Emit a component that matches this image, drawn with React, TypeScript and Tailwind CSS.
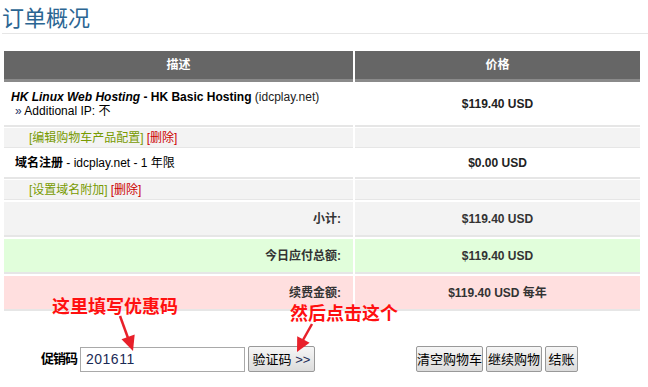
import React from 'react';

const FONT = "font-['Liberation_Sans','Noto_Sans_CJK_SC',sans-serif]";

interface TotalRow {
    label: string;
    price: string;
    bg: string;
}

const TOTALS: TotalRow[] = [
    { label: '小计:', price: '$119.40 USD', bg: 'bg-[#f3f3f3]' },
    { label: '今日应付总额:', price: '$119.40 USD', bg: 'bg-[#e1fedb]' },
    { label: '续费金额:', price: '$119.40 USD 每年', bg: 'bg-[#ffdfdf]' },
];

const Btn: React.FC<{ children: React.ReactNode; className?: string }> = ({ children, className }) => (
    <button
        className={`h-[26px] px-0 whitespace-nowrap flex items-center justify-center border border-[#999] rounded-[2px] bg-gradient-to-b from-[#f6f6f6] to-[#dcdcdc] text-[13px] text-black leading-none ${className ?? ''}`}
    >
        {children}
    </button>
);

const Arrows: React.FC = () => (
    <svg className="absolute inset-0 pointer-events-none" width="648" height="387" viewBox="0 0 648 387">
        <line x1="120" y1="316" x2="128" y2="338" stroke="#e8202a" strokeWidth="2.5" />
        <polygon points="133,351 121.5,339.3 134.7,334.5" fill="#e8202a" />
        <line x1="312" y1="324" x2="303" y2="340" stroke="#e8202a" strokeWidth="2.5" />
        <polygon points="297,352 297.2,336.3 309.6,342.7" fill="#e8202a" />
    </svg>
);

export default function App() {
    return (
        <div className={`relative w-[648px] h-[387px] overflow-hidden bg-white ${FONT} text-[12px] text-[#222]`}>
            {/* title */}
            <div className="ml-[2px] h-[34px] border-b border-[#e6e6e6] pt-[3px]">
                <h1 className="text-[22px] leading-[26px] text-[#2b6592] font-['Noto_Sans_CJK_SC',sans-serif]">订单概况</h1>
            </div>

            {/* cart table */}
            <div className="ml-[4px] mt-[17px] w-[636px] grid grid-cols-[349px_285px] gap-x-[2px]">
                <div className="h-[31px] bg-[#666] border-b-[3px] border-[#8a8a8a] flex items-center justify-center text-white font-bold">描述</div>
                <div className="h-[31px] bg-[#666] border-b-[3px] border-[#8a8a8a] flex items-center justify-center text-white font-bold">价格</div>

                <div className="mt-[1px] h-[44px] border-b-2 border-[#e6e6e6] pl-[7px] flex flex-col justify-center leading-[14px] text-black">
                    <div>
                        <b><i>HK Linux Web Hosting</i> - HK Basic Hosting</b> <span className="text-[#222]">(idcplay.net)</span>
                    </div>
                    <div className="pl-[4px]">
                        <span className="text-[#223366]">»</span> Additional IP: 不
                    </div>
                </div>
                <div className="mt-[1px] h-[44px] border-b-2 border-[#e6e6e6] flex items-center justify-center font-bold">$119.40 USD</div>

                <div className="mt-[1px] h-[20px] bg-[#f3f3f3] border-b border-[#e6e6e6] pl-[25px] flex items-center">
                    <span className="text-[#779a00]">[编辑购物车产品配置]</span>
                    <span className="ml-[3px] text-[#cc0000]">[删除]</span>
                </div>
                <div className="mt-[1px] h-[20px] bg-[#f3f3f3] border-b border-[#e6e6e6]" />

                <div className="mt-[1px] h-[30px] border-b-2 border-[#e6e6e6] pl-[11px] flex items-center text-black">
                    <b>域名注册</b>&nbsp;- idcplay.net - 1 年限
                </div>
                <div className="mt-[1px] h-[30px] border-b-2 border-[#e6e6e6] flex items-center justify-center font-bold">$0.00 USD</div>

                <div className="mt-[1px] h-[20px] bg-[#f3f3f3] border-b border-[#e6e6e6] pl-[25px] flex items-center">
                    <span className="text-[#779a00]">[设置域名附加]</span>
                    <span className="ml-[3px] text-[#cc0000]">[删除]</span>
                </div>
                <div className="mt-[1px] h-[20px] bg-[#f3f3f3] border-b border-[#e6e6e6]" />

                {TOTALS.map((t) => (
                    <React.Fragment key={t.label}>
                        <div className={`mt-[2px] h-[35px] ${t.bg} border-b-2 border-[#e6e6e6] flex items-center justify-end pr-[12px] font-bold text-[#333]`}>
                            {t.label}
                        </div>
                        <div className={`mt-[2px] h-[35px] ${t.bg} border-b-2 border-[#e6e6e6] flex items-center justify-center font-bold text-[#333]`}>
                            {t.price}
                        </div>
                    </React.Fragment>
                ))}
            </div>

            {/* promo + actions */}
            <div className="mt-[35px] flex items-center pl-[41px] pr-[70px]">
                <span className="text-[13px] font-bold text-black mr-[3px] tracking-[-1px]">促销码</span>
                <div className="w-[165px] h-[25px] border border-[#a9a9a9] flex items-center pl-[5px] text-[14px] text-[#1a2a55] tracking-[0.5px]">
                    201611
                </div>
                <Btn className="ml-[3px] w-[67px]">验证码&nbsp;<span className="text-[#1a2a55]">&gt;&gt;</span></Btn>
                <div className="ml-auto flex gap-[3px]">
                    <Btn className="w-[67px]">清空购物车</Btn>
                    <Btn className="w-[56px]">继续购物</Btn>
                    <Btn className="w-[33px]">结账</Btn>
                </div>
            </div>

            {/* annotations */}
            <div className="absolute left-[52px] top-[295px] text-[18px] leading-[20px] font-bold text-[#ff1010] font-['Noto_Sans_CJK_SC',sans-serif]">这里填写优惠码</div>
            <div className="absolute left-[290px] top-[302px] text-[18px] leading-[20px] font-bold text-[#ff1010] font-['Noto_Sans_CJK_SC',sans-serif]">然后点击这个</div>
            <Arrows />
        </div>
    );
}
